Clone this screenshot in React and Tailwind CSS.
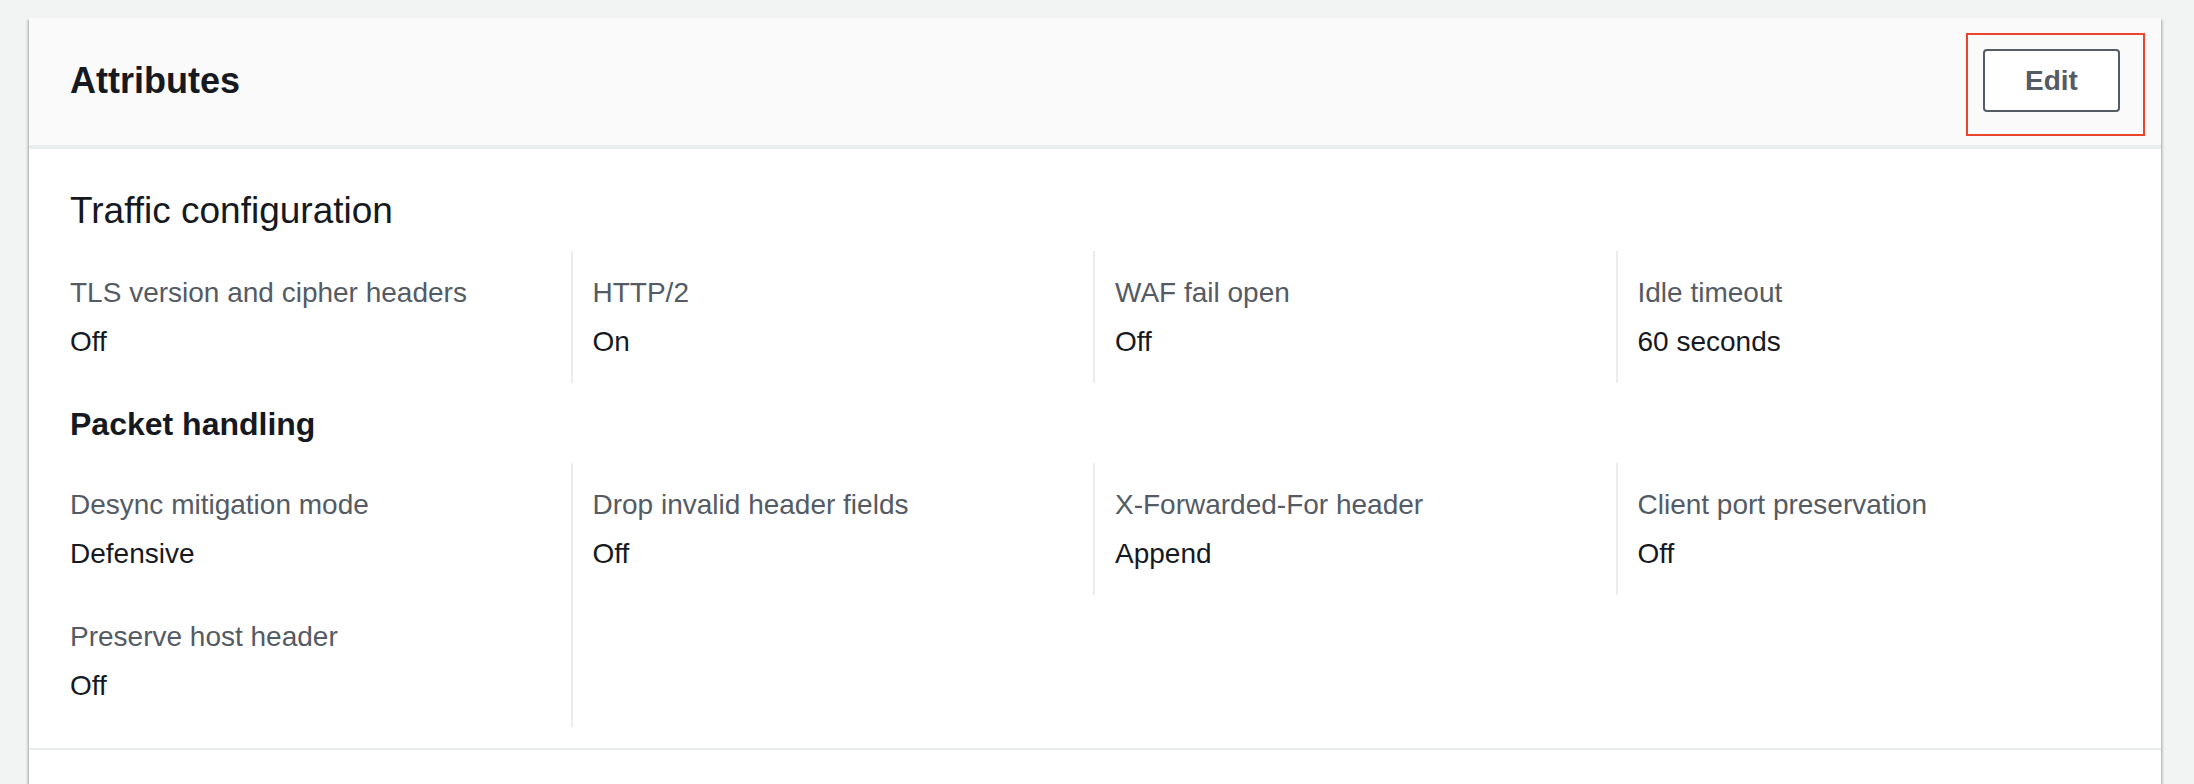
const traffic = [
  { label: 'TLS version and cipher headers', value: 'Off' },
  { label: 'HTTP/2', value: 'On' },
  { label: 'WAF fail open', value: 'Off' },
  { label: 'Idle timeout', value: '60 seconds' },
];

const packet = [
  { label: 'Desync mitigation mode', value: 'Defensive' },
  { label: 'Drop invalid header fields', value: 'Off' },
  { label: 'X-Forwarded-For header', value: 'Append' },
  { label: 'Client port preservation', value: 'Off' },
  { label: 'Preserve host header', value: 'Off' },
];

const Field = ({ label, value, last }) => (
  <div className={`pl-5 pr-5 pt-[22px] pb-[21px] ${last ? '' : 'border-r-2 border-[#eaeded]'}`}>
    <div className="text-[28px] leading-[40px] text-[#545b64]">{label}</div>
    <div className="mt-[9px] text-[28px] leading-[40px] text-[#16191f]">{value}</div>
  </div>
);

const FieldGrid = ({ items, className }) => (
  <div className={`-mx-5 grid grid-cols-4 ${className}`}>
    {items.map((item, i) => (
      <Field key={item.label} label={item.label} value={item.value} last={i % 4 === 3} />
    ))}
  </div>
);

const App = () => {
  return (
    <div className="h-screen overflow-hidden bg-[#f2f3f3] pl-[29px] pr-[33px] pt-[18px] font-['Liberation_Sans',Arial,sans-serif]">
      <div className="bg-white shadow-[0_2px_2px_0_rgba(0,28,36,0.3),2px_2px_2px_0_rgba(0,28,36,0.15),-2px_2px_2px_0_rgba(0,28,36,0.15)]">
        <div className="flex h-[131px] items-center justify-between border-b-4 border-[#eaeded] bg-[#fafafa] px-[41px] pb-[2px]">
          <h2 className="text-[36px] font-bold leading-[44px] text-[#16191f]">Attributes</h2>
          <div className="relative">
            <button className="flex h-[63px] w-[137px] items-center justify-center rounded-[4px] border-2 border-[#545b64] bg-white text-[28px] font-bold text-[#545b64]">
              Edit
            </button>
            <div className="pointer-events-none absolute -top-[16px] -left-[17px] -right-[25px] -bottom-[24px] border-2 border-[#e9452c]" />
          </div>
        </div>

        <div className="border-b-2 border-[#eaeded] px-[41px] pt-[40px] pb-[21px]">
          <h3 className="text-[37px] leading-[44px] text-[#16191f]">Traffic configuration</h3>
          <FieldGrid items={traffic} className="mt-[18px]" />
          <h4 className="mt-[21px] text-[32px] font-bold leading-[40px] text-[#16191f]">Packet handling</h4>
          <FieldGrid items={packet} className="mt-[19px]" />
        </div>
        <div className="h-[34px]" />
      </div>
    </div>
  );
};

export default App;
